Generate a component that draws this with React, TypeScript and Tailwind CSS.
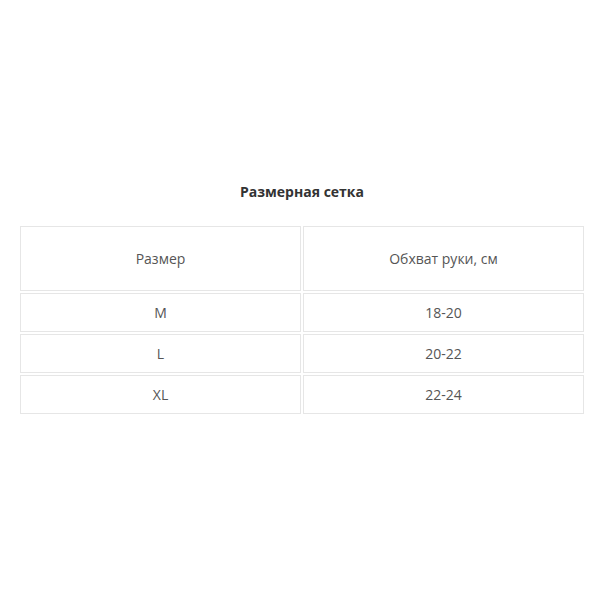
import { Fragment } from "react";

export default function App() {
  const rows = [
    ["M", "18-20"],
    ["L", "20-22"],
    ["XL", "22-24"],
  ];
  return (
    <div className="w-[600px] h-[600px] bg-white pt-[182px]" style={{ fontFamily: '"Open Sans", sans-serif' }}>
      <div className="ml-[20px] w-[564px]">
        <div className="text-center text-[14px] font-bold text-[#333] leading-[20px]">Размерная сетка</div>
        <div className="mt-[24px] grid grid-cols-2 gap-[2px] text-[14px] text-[#555]">
          <div className="h-[65px] border border-[#e6e6e6] flex items-center justify-center">Размер</div>
          <div className="h-[65px] border border-[#e6e6e6] flex items-center justify-center">Обхват руки, см</div>
          {rows.map(([a, b]) => (
            <Fragment key={a}>
              <div className="h-[39px] border border-[#e6e6e6] flex items-center justify-center">{a}</div>
              <div className="h-[39px] border border-[#e6e6e6] flex items-center justify-center">{b}</div>
            </Fragment>
          ))}
        </div>
      </div>
    </div>
  );
}
